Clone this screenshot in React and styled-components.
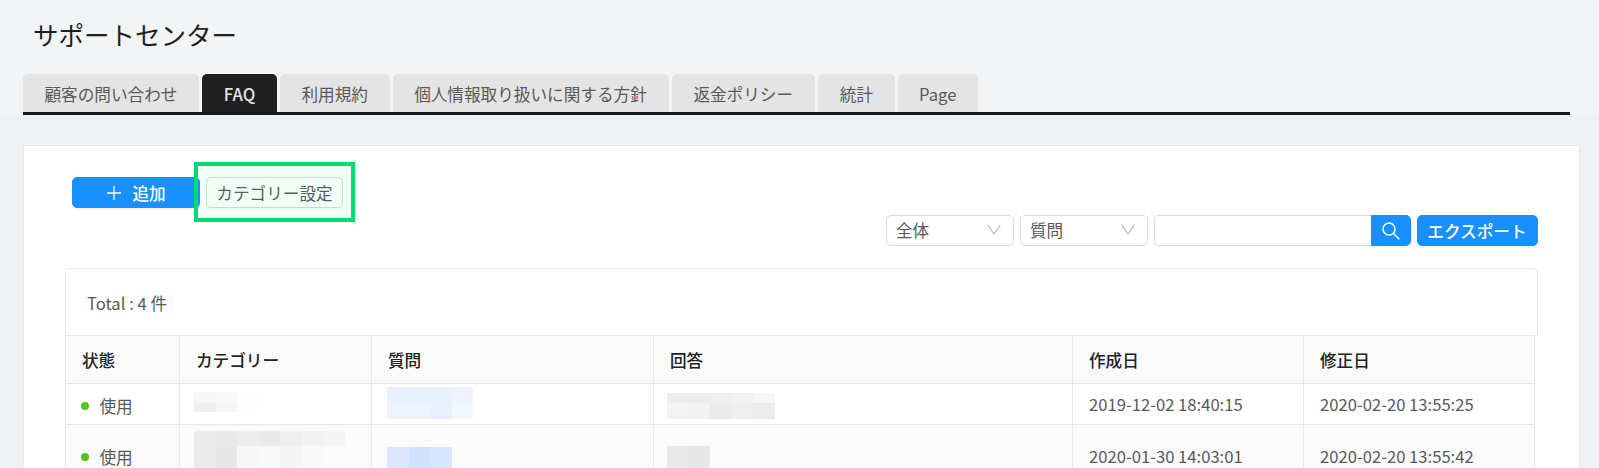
import React from "react";
import styled, { createGlobalStyle } from "styled-components";

const GlobalStyle = createGlobalStyle`
  *, *::before, *::after { box-sizing: border-box; }
  body {
    margin: 0;
    overflow: hidden;
    background: #f0f1f5;
    color: #595959;
    font-family: "Noto Sans CJK JP", "Noto Sans", sans-serif;
    font-size: 16.64px;
    line-height: 24px;
  }
`;

const Page = styled.div`
  width: 1599px;
  height: 468px;
  overflow: hidden;
`;

const Header = styled.header`
  height: 115px;
  padding: 16px 29px 0 23px;
  background: #f3f4f6;
`;

const Title = styled.h1`
  margin: 0 0 22px 10px;
  height: 36px;
  line-height: 36px;
  font-size: 25.5px;
  font-weight: 400;
  color: #1f1f1f;
`;

const TabBar = styled.nav`
  display: flex;
  width: 1547px;
  height: 41px;
  border-bottom: 3px solid #17181b;
`;

const Tab = styled.div`
  width: ${(p) => p.$width}px;
  height: 38px;
  margin-right: 3px;
  flex: none;
  border-radius: 5px 5px 0 0;
  text-align: center;
  line-height: 41px;
  color: ${(p) => (p.$active ? "#e4e4e4" : "#595959")};
  font-weight: ${(p) => (p.$active ? 500 : 400)};
  background: ${(p) => (p.$active ? "#1f1f1f" : "#e4e4e4")};
`;

const Card = styled.main`
  width: 1556.5px;
  height: 360px;
  margin: 30px 0 0 23px;
  padding: 31px 41px 0;
  border: 1px solid #e8e8ea;
  background: #fff;
`;

const Actions = styled.div`
  display: flex;
  position: relative;
  gap: 6px;
  height: 38px;
  padding-left: 7px;
`;

const Button = styled.button`
  display: flex;
  align-items: center;
  justify-content: center;
  width: ${(p) => p.$width}px;
  height: 31px;
  padding: 0;
  flex: none;
  border: 1px solid ${(p) => (p.$primary ? "#1890ff" : "#d9d9d9")};
  border-radius: ${(p) => p.$radius || "5px"};
  background: ${(p) => (p.$primary ? "#1890ff" : "#fff")};
  color: ${(p) => (p.$primary ? "#fff" : "#595959")};
  box-shadow: 0 2px 0 rgba(0, 0, 0, ${(p) => (p.$primary ? 0.04 : 0.015)});
  font: inherit;
  font-weight: ${(p) => (p.$primary ? 500 : 400)};
  line-height: 28px;
  svg { flex: none; }
`;

const AddIcon = styled.svg`
  margin: 0 11px 0 1px;
`;

const Highlight = styled.div`
  position: absolute;
  left: 129px;
  top: -15px;
  width: 161px;
  height: 60px;
  border: 4px solid #00dc6e;
  background: rgba(0, 220, 110, 0.055);
`;

const Filters = styled.div`
  display: flex;
  justify-content: flex-end;
  height: 31px;
  margin-bottom: 22px;
`;

const Select = styled.div`
  display: flex;
  align-items: center;
  justify-content: space-between;
  width: 128px;
  height: 31px;
  margin-right: 6px;
  padding: 0 12px 2px 9px;
  border: 1px solid #d9d9d9;
  border-radius: 5px;
`;

const SearchInput = styled.input`
  width: 216.5px;
  height: 31px;
  border: 1px solid #d9d9d9;
  border-right: 0;
  border-radius: 5px 0 0 5px;
  background: #fff;
  outline: none;
`;

const SearchGroup = styled.div`
  display: flex;
  margin-right: 6px;
`;

const Total = styled.div`
  height: 68px;
  padding: 0 21px;
  line-height: 68px;
  border: 1px solid #e8e8e8;
  border-radius: 5px 5px 0 0;
`;

const Table = styled.div`
  width: 1470px;
  margin-top: -1px;
  border-left: 1px solid #e8e8e8;
  border-top: 1px solid #e6e6e6;
`;

const Row = styled.div`
  display: grid;
  grid-template-columns: 114px 192px 282px 419px 231px 231px;
  height: ${(p) => p.$height}px;
  background: ${(p) => p.$bg};
`;

const Cell = styled.div`
  padding: ${(p) => p.$top || 0}px 0 0 ${(p) => (p.$left === undefined ? 16 : p.$left)}px;
  border-right: 1px solid #e8e8e8;
  border-bottom: 1px solid #e6e6e6;
  overflow: hidden;
  white-space: nowrap;
  line-height: 20px;
`;

const HeadCell = styled(Cell)`
  line-height: 49px;
  font-weight: 500;
  color: #222;
`;

const Status = styled.div`
  display: flex;
  align-items: center;
  gap: 10.5px;
  &::before {
    content: "";
    width: 8px;
    height: 8px;
    border-radius: 50%;
    background: #52c41a;
  }
`;

const MosaicLine = styled.div`
  display: flex;
  height: ${(p) => p.$height}px;
`;

const Tile = styled.span`
  width: 21.5px;
  background: ${(p) => p.$color};
`;

function Mosaic({ lines }) {
  return lines.map(([height, ...colors], i) => (
    <MosaicLine key={i} $height={height}>
      {colors.map((color, j) => (
        <Tile key={j} $color={color} />
      ))}
    </MosaicLine>
  ));
}

function Chevron() {
  return (
    <svg width="14" height="12" viewBox="0 0 14 12" fill="none" stroke="#bfbfbf" strokeWidth="1.3">
      <path d="M.8 1.2 7 9.8l6.2-8.6" />
    </svg>
  );
}

const TABS = [
  ["顧客の問い合わせ", 176],
  ["FAQ", 75],
  ["利用規約", 109.5],
  ["個人情報取り扱いに関する方針", 276],
  ["返金ポリシー", 143.5],
  ["統計", 76.5],
  ["Page", 80.5],
];

const HEADINGS = ["状態", "カテゴリー", "質問", "回答", "作成日", "修正日"];

const ROWS = [
  {
    height: 41,
    bg: "#fff",
    statusPad: 12,
    pad: 10,
    tops: [8, 3, 9],
    category: [[11, "#f6f6f6", "#f8f8f8", "#fefefe"], [9, "#f0f0f0", "#f5f5f5", "#fefefe"]],
    question: [[16, "#e8f1ff", "#e6f2fe", "#e9f1ff", "#edf4ff"], [16, "#edf4ff", "#ecf4fe", "#e9f1ff", "#f2f7ff"]],
    answer: [[10, "#eeeeee", "#ededed", "#efefef", "#f1f1f1", "#f7f7f7"], [16, "#f3f3f3", "#f2f2f2", "#ecebe9", "#efefef", "#ebeded"]],
    created: "2019-12-02 18:40:15",
    modified: "2020-02-20 13:55:25",
  },
  {
    height: 64,
    bg: "#fbfbfb",
    statusPad: 22,
    pad: 21,
    tops: [6, 22, 21],
    category: [[15, "#ebe9e9", "#e9e9e9", "#ececec", "#e9e9e9", "#f0efed", "#f2f2f2", "#f5f5f5"], [25, "#eaeaea", "#e7e7e7", "#f7f7f7", "#f7faf9", "#f5f5f5", "#f9f9f9"]],
    question: [[30, "#dbe8fe", "#cfe1fe", "#d5e6ff"]],
    answer: [[30, "#e8e8e8", "#e6e7e8"]],
    created: "2020-01-30 14:03:01",
    modified: "2020-02-20 13:55:42",
  },
];

export default function App() {
  return (
    <Page>
      <GlobalStyle />
      <Header>
        <Title>サポートセンター</Title>
        <TabBar>
          {TABS.map(([label, width]) => (
            <Tab key={label} $width={width} $active={label === "FAQ"}>
              {label}
            </Tab>
          ))}
        </TabBar>
      </Header>
      <Card>
        <Actions>
          <Button $primary $width={128}>
            <AddIcon width="14" height="14" viewBox="0 0 14 14" fill="none" stroke="#fff" strokeWidth="1.3">
              <path d="M7 0v14M0 7h14" />
            </AddIcon>
            追加
          </Button>
          <Button $width={137}>カテゴリー設定</Button>
          <Highlight />
        </Actions>
        <Filters>
          <Select>全体<Chevron /></Select>
          <Select>質問<Chevron /></Select>
          <SearchGroup>
            <SearchInput />
            <Button $primary $width={40} $radius="0 5px 5px 0">
              <svg width="18" height="18" viewBox="0 0 18 18" fill="none" stroke="#fff" strokeWidth="1.5">
                <circle cx="7" cy="7" r="6" />
                <path d="m11.3 11.3 6 6" />
              </svg>
            </Button>
          </SearchGroup>
          <Button $primary $width={121}>エクスポート</Button>
        </Filters>
        <Total>Total : 4 件</Total>
        <Table>
          <Row $height={48} $bg="#fafafa">
            {HEADINGS.map((h) => (
              <HeadCell key={h}>{h}</HeadCell>
            ))}
          </Row>
          {ROWS.map((r) => (
            <Row key={r.created} $height={r.height} $bg={r.bg}>
              <Cell $top={r.statusPad} $left={15}>
                <Status>使用</Status>
              </Cell>
              <Cell $top={r.tops[0]} $left={14}><Mosaic lines={r.category} /></Cell>
              <Cell $top={r.tops[1]} $left={15}><Mosaic lines={r.question} /></Cell>
              <Cell $top={r.tops[2]} $left={13}><Mosaic lines={r.answer} /></Cell>
              <Cell $top={r.pad}>{r.created}</Cell>
              <Cell $top={r.pad}>{r.modified}</Cell>
            </Row>
          ))}
        </Table>
      </Card>
    </Page>
  );
}
